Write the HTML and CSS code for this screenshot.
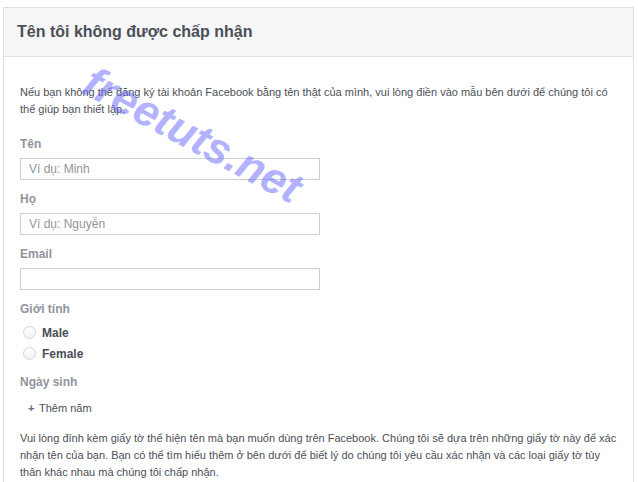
FILE: index.html
```html
<!DOCTYPE html>
<html lang="vi">
<head>
<meta charset="utf-8">
<title>Tên tôi không được chấp nhận</title>
<link rel="stylesheet" href="styles.css">
</head>
<body>
<div class="page">
  <div class="card">
    <div class="card-header">Tên tôi không được chấp nhận</div>
    <div class="card-body">
      <p class="intro">Nếu bạn không thể đăng ký tài khoản Facebook bằng tên thật của mình, vui lòng điền vào mẫu bên dưới để chúng tôi có thể giúp bạn thiết lập.</p>

      <div class="field">
        <label class="label">Tên</label>
        <input class="text-input" type="text" placeholder="Ví dụ: Minh">
      </div>
      <div class="field">
        <label class="label">Họ</label>
        <input class="text-input" type="text" placeholder="Ví dụ: Nguyễn">
      </div>
      <div class="field">
        <label class="label">Email</label>
        <input class="text-input" type="text">
      </div>

      <div class="field gender">
        <div class="label">Giới tính</div>
        <div class="radios">
          <label class="radio-row"><input class="radio" type="radio" name="g"><span>Male</span></label>
          <label class="radio-row"><input class="radio" type="radio" name="g"><span>Female</span></label>
        </div>
      </div>

      <div class="field birth">
        <div class="label">Ngày sinh</div>
        <div class="add-year"><span class="plus">+</span>Thêm năm</div>
      </div>

      <p class="note">Vui lòng đính kèm giấy tờ thể hiện tên mà bạn muốn dùng trên Facebook. Chúng tôi sẽ dựa trên những giấy tờ này để xác nhận tên của bạn. Bạn có thể tìm hiểu thêm ở bên dưới để biết lý do chúng tôi yêu cầu xác nhận và các loại giấy tờ tùy thân khác nhau mà chúng tôi chấp nhận.</p>
    </div>
  </div>
  <span class="watermark">freetuts.net</span>
</div>
</body>
</html>
```

FILE: styles.css
```css
html, body {
  margin: 0;
  padding: 0;
  background: #fff;
}

body {
  font-family: "Liberation Sans", Arial, sans-serif;
  font-size: 12px;
  color: #4b4f56;
  height: 482px;
  overflow: hidden;
}

.page {
  position: relative;
  padding: 7px 4px 0 3px;
}

.card {
  border: 1px solid #dddfe2;
  border-bottom: none;
  background: #fff;
}

.card-header {
  height: 48px;
  display: flex;
  align-items: center;
  padding: 0 13px;
  background: #f5f6f7;
  border-bottom: 1px solid #dddfe2;
  font-size: 16px;
  font-weight: bold;
  color: #4b4f56;
}

.card-body {
  padding: 27px 12px 20px 16px;
}

.intro {
  margin: 0 0 18px;
  font-size: 11px;
  line-height: 17px;
}

.field {
  margin-bottom: 10px;
}

.label {
  display: block;
  line-height: 16px;
  font-weight: bold;
  color: #90949c;
  margin-bottom: 6px;
}

.text-input {
  display: block;
  box-sizing: border-box;
  width: 300px;
  height: 22px;
  margin: 0;
  padding: 0 8px;
  border: 1px solid #ccd0d5;
  border-radius: 0;
  font-family: inherit;
  font-size: 12px;
  color: #4b4f56;
  outline: none;
}

.text-input::placeholder {
  color: #90949c;
}

.field + .field {
  padding-top: 1px;
}

.gender .label {
  margin-bottom: 5px;
}

.radios {
  display: flex;
  flex-direction: column;
}

.radio-row {
  display: flex;
  align-items: center;
  height: 21px;
  font-weight: bold;
  color: #4b4f56;
}

.radio {
  appearance: none;
  -webkit-appearance: none;
  box-sizing: border-box;
  width: 13px;
  height: 13px;
  margin: 0 6px 0 3px;
  border: 1px solid #d3d6db;
  border-radius: 50%;
  background: linear-gradient(#fff, #f2f3f5);
}

.birth {
  padding-top: 0 !important;
}

.birth .label {
  margin-bottom: 10px;
}

.add-year {
  line-height: 16px;
  padding-left: 8px;
  font-size: 11px;
  color: #4b4f56;
}

.plus {
  display: inline-block;
  width: 11px;
  font-size: 11px;
  font-weight: bold;
  color: #5b6b8c;
}

.note {
  margin: 14px 0 0;
  font-size: 11px;
  line-height: 17px;
}

.watermark {
  position: absolute;
  left: 73px;
  top: 110px;
  font-size: 44px;
  font-weight: bold;
  font-style: italic;
  line-height: 50px;
  white-space: nowrap;
  color: rgba(102, 102, 255, 0.5);
  transform: rotate(28deg);
  transform-origin: center;
  pointer-events: none;
}
```
